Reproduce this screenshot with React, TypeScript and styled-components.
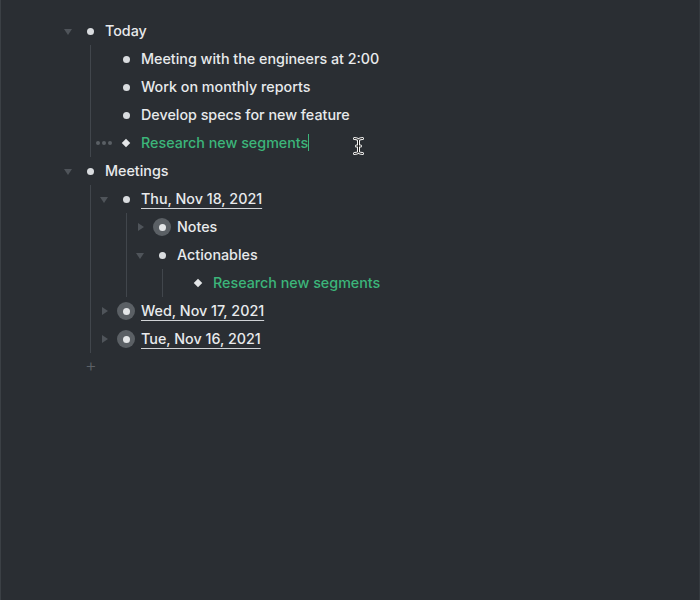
import React from "react";
import styled, { createGlobalStyle } from "styled-components";

const Global = createGlobalStyle`
  html, body { margin: 0; padding: 0; background: #2a2e33; }
  body { font-family: Inter, "Noto Sans", sans-serif; -webkit-font-smoothing: antialiased; }
`;

const Page = styled.div`
  width: 700px;
  height: 600px;
  box-sizing: border-box;
  background: #2a2e33;
  border-left: 1px solid #3b4045;
  border-right: 1px solid #34393e;
  padding: 17px 0 0 56px;
  position: relative;
`;

const Row = styled.div`
  display: flex;
  align-items: center;
  height: 28px;
`;

const Slot = styled.div`
  width: 22px;
  height: 28px;
  display: flex;
  align-items: center;
  justify-content: center;
  flex: none;
`;

const Arrow = styled.span<{ $open: boolean }>`
  width: 0;
  height: 0;
  ${(p) =>
    p.$open
      ? `border-left: 4.5px solid transparent; border-right: 4.5px solid transparent; border-top: 6px solid #4f545a; margin-top: 1px;`
      : `border-top: 4.5px solid transparent; border-bottom: 4.5px solid transparent; border-left: 6px solid #4f545a; margin-left: 1px;`}
`;

const Dots = styled.span`
  display: flex;
  gap: 2px;
  span {
    width: 4px;
    height: 4px;
    border-radius: 50%;
    background: #5a5f65;
  }
`;

const Dot = styled.span`
  width: 7px;
  height: 7px;
  border-radius: 50%;
  background: #d9dcdf;
`;

const Ring = styled.span`
  width: 18px;
  height: 18px;
  border-radius: 50%;
  background: #5b6065;
  display: flex;
  align-items: center;
  justify-content: center;
  &::after {
    content: "";
    width: 7px;
    height: 7px;
    border-radius: 50%;
    background: #e4e6e8;
  }
`;

const Diamond = styled.span`
  width: 6px;
  height: 6px;
  background: #e4e6e8;
  transform: rotate(45deg);
`;

const Text = styled.span<{ $green?: boolean; $link?: boolean }>`
  margin-left: 4px;
  font-size: 14.3px;
  font-weight: 500;
  line-height: 20px;
  color: ${(p) => (p.$green ? "#3cb57a" : "#e8eaec")};
  white-space: nowrap;
  ${(p) =>
    p.$link
      ? `text-decoration: underline; text-decoration-thickness: 1px; text-underline-offset: 4px; text-decoration-color: #d0d3d6;`
      : ""}
`;

const Caret = styled.span`
  display: inline-block;
  width: 1px;
  height: 17px;
  background: #3cb57a;
  vertical-align: -3px;
`;

const Children = styled.div`
  margin-left: 33px;
  border-left: 1px solid #41464c;
  padding-left: 2px;
`;

const Plus = styled.div`
  height: 28px;
  width: 22px;
  margin-left: 23px;
  padding-bottom: 4px;
  box-sizing: border-box;
  color: #5c6167;
  font-size: 18px;
  font-weight: 300;
  display: flex;
  align-items: center;
  justify-content: center;
`;

const Beam = styled.svg`
  position: absolute;
  left: 352px;
  top: 137px;
`;

type Node = {
  text: string;
  open?: boolean;
  collapsed?: boolean;
  kind?: "dot" | "ring" | "diamond";
  green?: boolean;
  link?: boolean;
  dots?: boolean;
  caret?: boolean;
  children?: Node[];
};

const data: Node[] = [
  {
    text: "Today",
    open: true,
    children: [
      { text: "Meeting with the engineers at 2:00" },
      { text: "Work on monthly reports" },
      { text: "Develop specs for new feature" },
      { text: "Research new segments", kind: "diamond", green: true, dots: true, caret: true },
    ],
  },
  {
    text: "Meetings",
    open: true,
    children: [
      {
        text: "Thu, Nov 18, 2021",
        link: true,
        open: true,
        children: [
          { text: "Notes", collapsed: true, kind: "ring" },
          {
            text: "Actionables",
            open: true,
            children: [{ text: "Research new segments", kind: "diamond", green: true }],
          },
        ],
      },
      { text: "Wed, Nov 17, 2021", link: true, collapsed: true, kind: "ring" },
      { text: "Tue, Nov 16, 2021", link: true, collapsed: true, kind: "ring" },
    ],
  },
];

function Item({ node }: { node: Node }) {
  const kind = node.kind ?? "dot";
  return (
    <div>
      <Row>
        <Slot>
          {node.dots ? (
            <Dots>
              <span />
              <span />
              <span />
            </Dots>
          ) : node.open ? (
            <Arrow $open />
          ) : node.collapsed ? (
            <Arrow $open={false} />
          ) : null}
        </Slot>
        <Slot>{kind === "ring" ? <Ring /> : kind === "diamond" ? <Diamond /> : <Dot />}</Slot>
        <Text $green={node.green} $link={node.link}>
          {node.text}
          {node.caret && <Caret />}
        </Text>
      </Row>
      {node.children && (
        <Children>
          {node.children.map((c, i) => (
            <Item key={i} node={c} />
          ))}
        </Children>
      )}
    </div>
  );
}

export default function App() {
  return (
    <>
      <Global />
      <Page>
        {data.map((n, i) => (
          <Item key={i} node={n} />
        ))}
        <Plus>+</Plus>
        <Beam width="11" height="18" viewBox="0 0 11 18">
          <path
            d="M1.5 1.5 C3.5 1.5 4.5 2 5.5 3 C6.5 2 7.5 1.5 9.5 1.5 M5.5 3 V15 M1.5 16.5 C3.5 16.5 4.5 16 5.5 15 C6.5 16 7.5 16.5 9.5 16.5 M3.5 9 H7.5"
            fill="none"
            stroke="#f2f2f2"
            strokeWidth="3"
            strokeLinecap="round"
          />
          <path
            d="M1.5 1.5 C3.5 1.5 4.5 2 5.5 3 C6.5 2 7.5 1.5 9.5 1.5 M5.5 3 V15 M1.5 16.5 C3.5 16.5 4.5 16 5.5 15 C6.5 16 7.5 16.5 9.5 16.5 M3.5 9 H7.5"
            fill="none"
            stroke="#111"
            strokeWidth="1"
            strokeLinecap="round"
          />
        </Beam>
      </Page>
    </>
  );
}
